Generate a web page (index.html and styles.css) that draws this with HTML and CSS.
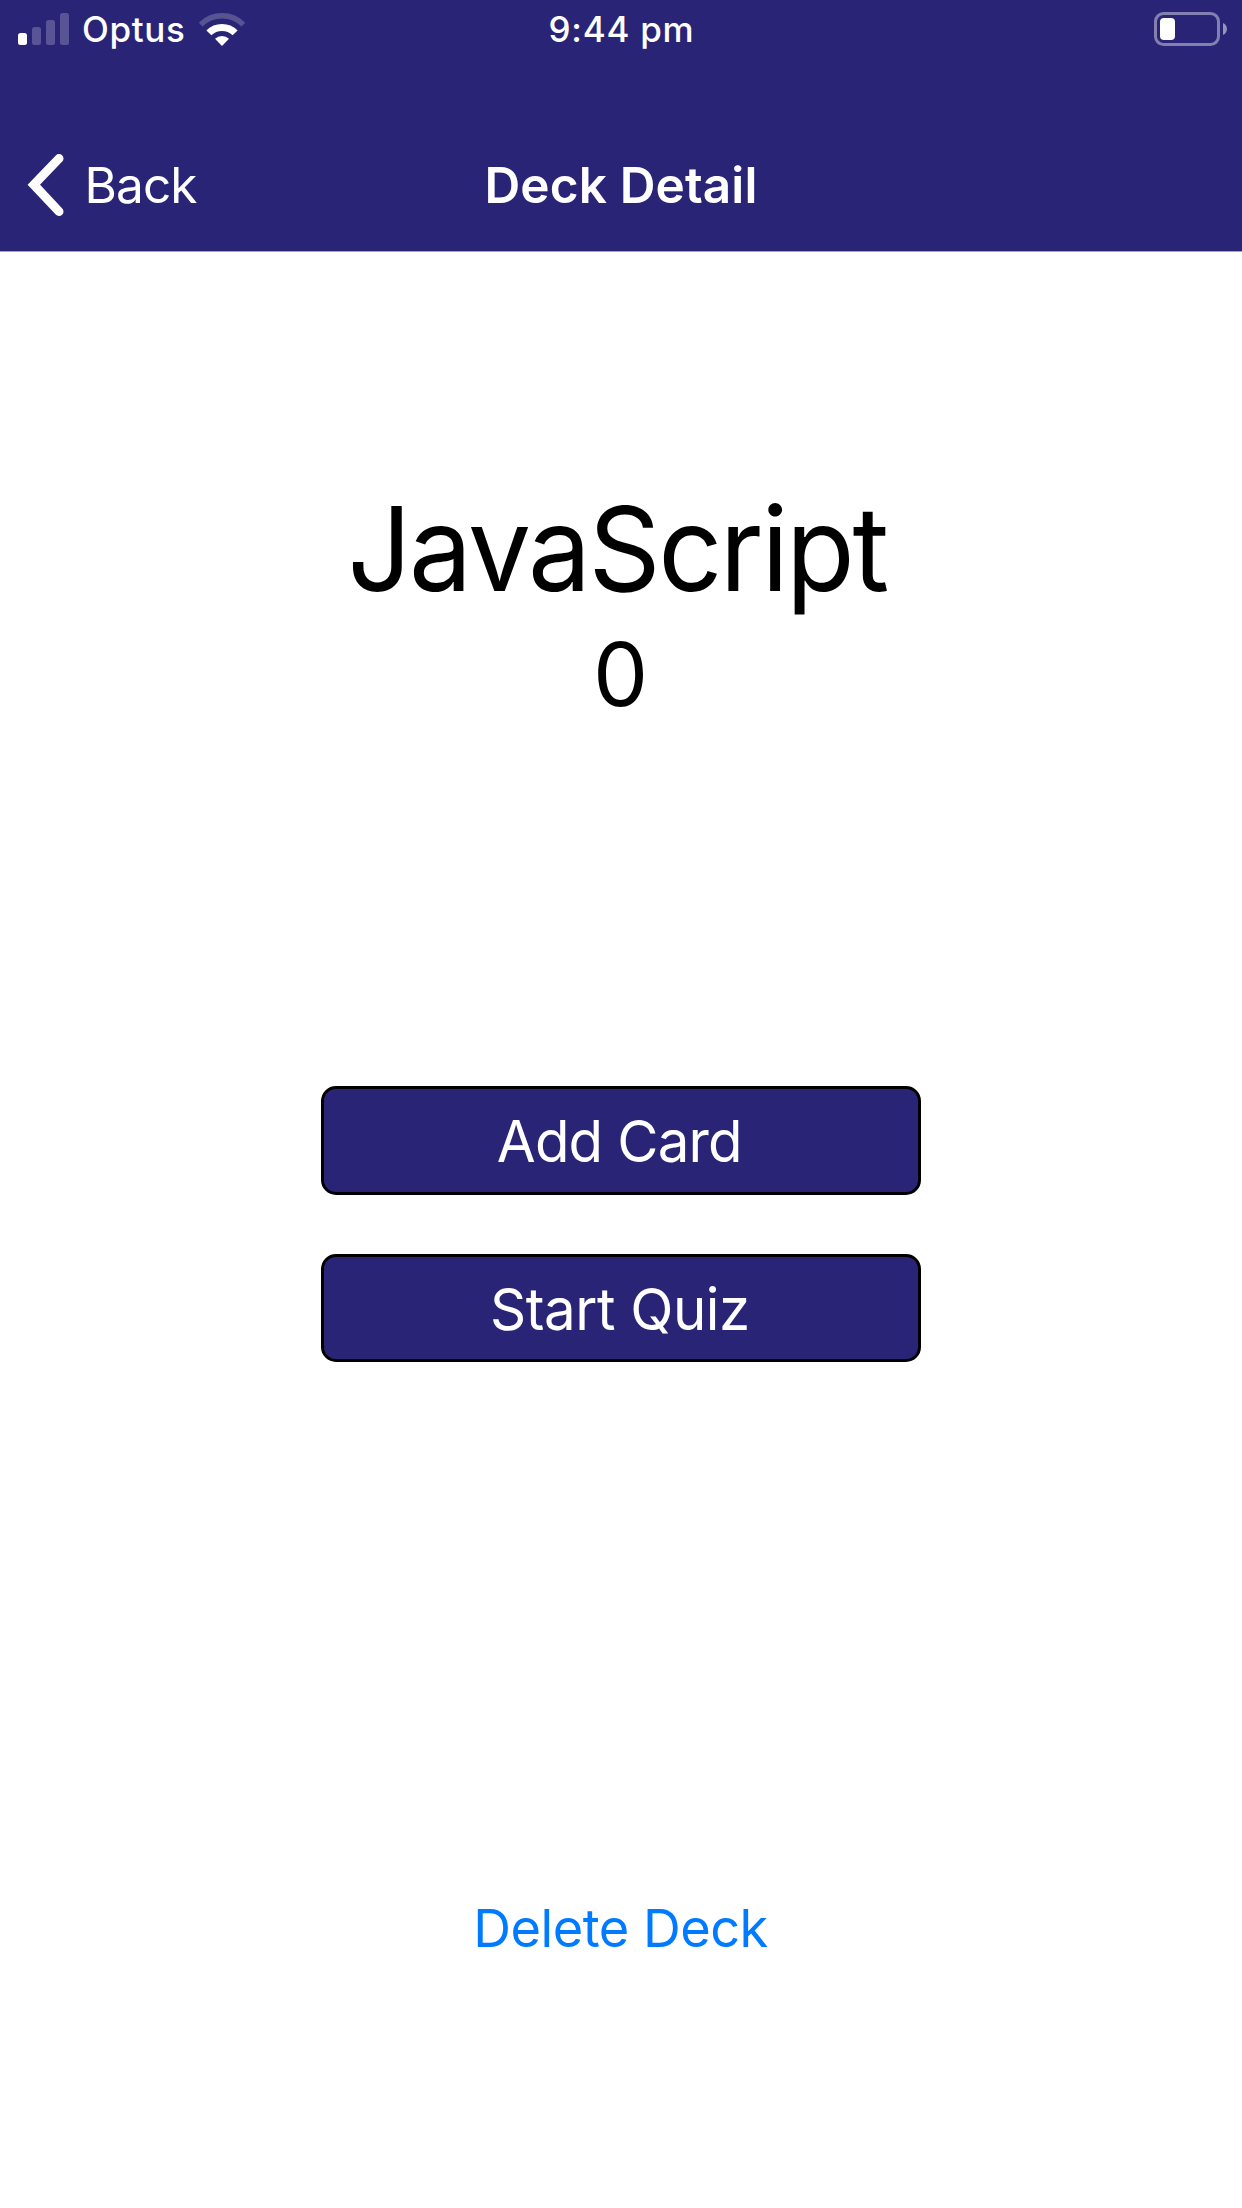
FILE: index.html
```
<!DOCTYPE html>
<html lang="en">
<head>
<meta charset="utf-8">
<title>Deck Detail</title>
<link rel="stylesheet" href="styles.css">
</head>
<body>
<header class="header">
  <div class="status">
    <div class="status-left">
      <svg class="signal" width="51" height="32" viewBox="0 0 51 32" fill="#fff">
        <rect x="0" y="20" width="9" height="12" rx="2.5"/>
        <g opacity=".22">
          <rect x="14" y="14" width="9" height="18" rx="2.5"/>
          <rect x="28" y="7" width="9" height="25" rx="2.5"/>
          <rect x="42" y="0" width="9" height="32" rx="2.5"/>
        </g>
      </svg>
      <span class="carrier">Optus</span>
      <svg class="wifi" width="46" height="33" viewBox="-23 -33 46 33" fill="none" stroke="#fff">
        <path d="M-21.4-21.4A30.3 30.3 0 0 1 21.4-21.4" stroke-width="5.4" opacity=".22"/>
        <path d="M-13.1-13.1A18.5 18.5 0 0 1 13.1-13.1" stroke-width="7"/>
        <path d="M0 0L-7-7.2A10 10 0 0 1 7-7.2Z" fill="#fff" stroke="none"/>
      </svg>
    </div>
    <span class="time">9:44 pm</span>
    <div class="status-right">
      <svg width="73" height="34" viewBox="0 0 73 34" fill="none">
        <rect x="1.5" y="1.5" width="63" height="31" rx="8" stroke="#fff" stroke-width="3" opacity=".42"/>
        <rect x="6" y="6" width="15" height="22" rx="4" fill="#fff"/>
        <path d="M69 11C74.300 13 74.300 21 69 23Z" fill="#fff" opacity=".5"/>
      </svg>
    </div>
  </div>
  <nav class="nav">
    <a class="back">
      <svg width="37" height="62" viewBox="0 0 37 62" fill="none" stroke="#fff" stroke-width="9" stroke-linecap="round">
        <path d="M32 4.500L6.800 30.700L32 57.500"/>
      </svg>
      <span>Back</span>
    </a>
    <h1 class="nav-title">Deck Detail</h1>
  </nav>
</header>
<main class="main">
  <h2 class="deck-name">JavaScript</h2>
  <p class="deck-count">0</p>
  <div class="actions">
    <button class="btn btn-add"><span>Add Card</span></button>
    <button class="btn btn-quiz"><span>Start Quiz</span></button>
  </div>
  <a class="delete">Delete Deck</a>
</main>
</body>
</html>
```
FILE: styles.css
```
* { box-sizing: border-box; }
body {
  margin: 0;
  background: #fff;
  color: #000;
  font-family: Inter, "Liberation Sans", sans-serif;
}
svg { display: block; flex: none; }
.header {
  height: 252px;
  background: #2a2477;
  border-bottom: 1px solid #a7a7aa;
  color: #fff;
}
.status {
  display: grid;
  grid-template-columns: 1fr auto 1fr;
  align-items: center;
  height: 58px;
  padding: 0 15px 0 18px;
  font-size: 35px;
  font-weight: 500;
}
.status-left { display: flex; align-items: center; }
.carrier { margin-left: 13px; letter-spacing: .64px; }
.wifi { margin-left: 14px; }
.time { letter-spacing: .74px; padding-right: 2px; }
.status-right { display: flex; justify-content: flex-end; }
.nav {
  display: grid;
  grid-template-columns: 1fr auto 1fr;
  align-items: center;
  height: 132px;
  margin-top: 61px;
  padding: 0 27px;
  font-size: 49.5px;
}
.back {
  display: flex;
  align-items: center;
  gap: 20.5px;
  letter-spacing: -.9px;
}
.nav-title {
  margin: 0;
  font-size: 49.5px;
  font-weight: 600;
  letter-spacing: .14px;
}
.main {
  display: flex;
  flex-direction: column;
  align-items: center;
  padding-top: 225px;
}
.deck-name {
  margin: 0;
  padding-right: 9px;
  font-size: 117px;
  font-weight: 420;
  line-height: 143px;
  letter-spacing: -2.6px;
  transform: scaleX(.96);
}
.deck-count {
  margin: 0;
  padding-right: 1px;
  font-size: 87.5px;
  line-height: 108px;
}
.actions {
  display: flex;
  flex-direction: column;
  gap: 59px;
  width: 600px;
  margin-top: 358px;
}
.btn {
  display: flex;
  align-items: center;
  justify-content: center;
  height: 109px;
  padding: 0;
  border: 3px solid #000;
  border-radius: 15px;
  background: #2a2477;
  color: #fff;
  font-family: inherit;
  font-size: 58.2px;
}
.btn-quiz {
  height: 108px;
  padding-top: 2px;
}
.btn span { transform: scaleX(.97); }
.btn-add span {
  padding-right: 4px;
  letter-spacing: -.9px;
}
.btn-quiz span {
  padding-right: 2px;
  letter-spacing: -.5px;
}
.delete {
  margin-top: 534px;
  padding-right: 1px;
  color: #007aff;
  font-size: 52.3px;
  line-height: 64px;
  letter-spacing: -.5px;
}
```
